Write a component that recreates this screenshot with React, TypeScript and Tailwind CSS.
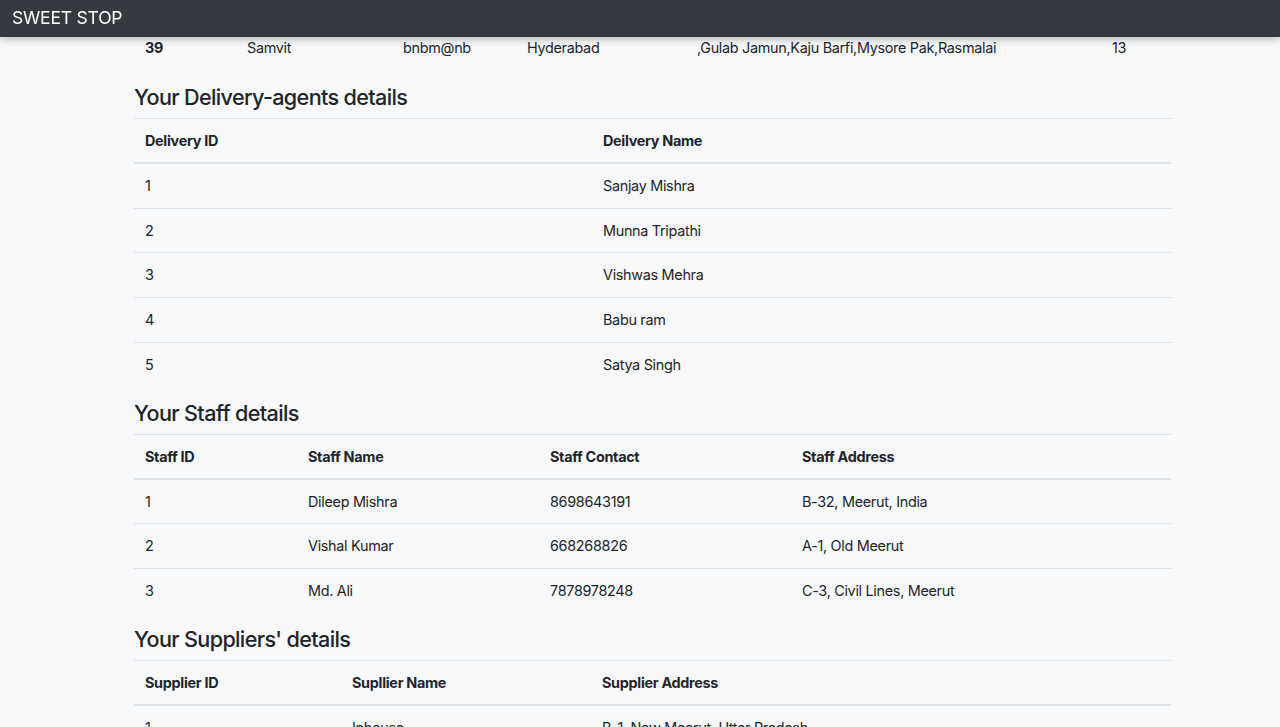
type Col = { label: string; width?: string };

function DataTable({
  cols,
  rows,
  boldFirst,
  hideHead,
  className = "mb-[13.5px]",
}: {
  cols: Col[];
  rows: string[][];
  boldFirst?: boolean;
  hideHead?: boolean;
  className?: string;
}) {
  return (
    <table className={"w-full border-collapse table-fixed " + className}>
      <colgroup>
        {cols.map((c, i) => (
          <col key={i} style={c.width ? { width: c.width } : undefined} />
        ))}
      </colgroup>
      {!hideHead && (
        <thead>
          <tr>
            {cols.map((c, i) => (
              <th
                key={i}
                className="text-left font-bold px-[11px] py-[10.5px] leading-[21.6px] border-t border-[#dee2e6] border-b-2"
              >
                {c.label}
              </th>
            ))}
          </tr>
        </thead>
      )}
      <tbody>
        {rows.map((r, ri) => (
          <tr key={ri}>
            {r.map((cell, ci) => (
              <td
                key={ci}
                className={
                  "px-[11px] py-[11px] leading-[21.75px] border-t border-[#dee2e6] whitespace-nowrap " +
                  (boldFirst && ci === 0 ? "font-bold" : "")
                }
              >
                {cell}
              </td>
            ))}
          </tr>
        ))}
      </tbody>
    </table>
  );
}

function Heading({ children }: { children: React.ReactNode }) {
  return (
    <h4 className="text-[21.6px] font-medium leading-[26px] mb-[8px] tracking-[-0.65px]">
      {children}
    </h4>
  );
}

export default function App() {
  return (
    <div
      className="min-h-screen bg-[#f8f9fa] text-[#212529] text-[14.4px] tracking-[-0.3px]"
      style={{ fontFamily: "Inter, 'Helvetica Neue', Arial, sans-serif" }}
    >
      <nav className="fixed top-0 left-0 right-0 z-10 h-[37px] bg-[#343a40] flex items-center px-[12px] shadow-[0_2px_8px_rgba(0,0,0,0.28)]">
        <span className="text-white text-[17.5px] tracking-[-0.2px]">SWEET STOP</span>
      </nav>

      <main className="w-[1037px] ml-[134px] pt-[25px]">
        <DataTable
          hideHead
          boldFirst
          className="mb-[14.5px]"
          cols={[
            { label: "", width: "102px" },
            { label: "", width: "156px" },
            { label: "", width: "124px" },
            { label: "", width: "170px" },
            { label: "", width: "415px" },
            { label: "" },
          ]}
          rows={[
            ["39", "Samvit", "bnbm@nb", "Hyderabad", ",Gulab Jamun,Kaju Barfi,Mysore Pak,Rasmalai", "13"],
          ]}
        />

        <Heading>Your Delivery-agents details</Heading>
        <DataTable
          cols={[{ label: "Delivery ID", width: "458px" }, { label: "Deilvery Name" }]}
          rows={[
            ["1", "Sanjay Mishra"],
            ["2", "Munna Tripathi"],
            ["3", "Vishwas Mehra"],
            ["4", "Babu ram"],
            ["5", "Satya Singh"],
          ]}
        />

        <Heading>Your Staff details</Heading>
        <DataTable
          cols={[
            { label: "Staff ID", width: "163px" },
            { label: "Staff Name", width: "242px" },
            { label: "Staff Contact", width: "252px" },
            { label: "Staff Address" },
          ]}
          rows={[
            ["1", "Dileep Mishra", "8698643191", "B-32, Meerut, India"],
            ["2", "Vishal Kumar", "668268826", "A-1, Old Meerut"],
            ["3", "Md. Ali", "7878978248", "C-3, Civil Lines, Meerut"],
          ]}
        />

        <Heading>Your Suppliers' details</Heading>
        <DataTable
          cols={[
            { label: "Supplier ID", width: "207px" },
            { label: "Supllier Name", width: "250px" },
            { label: "Supplier Address" },
          ]}
          rows={[
            ["1", "Inhouse", "B-1, New Meerut, Uttar Pradesh"],
            ["2", "Haldiram", "Sector 62, Noida"],
          ]}
        />
      </main>
    </div>
  );
}
